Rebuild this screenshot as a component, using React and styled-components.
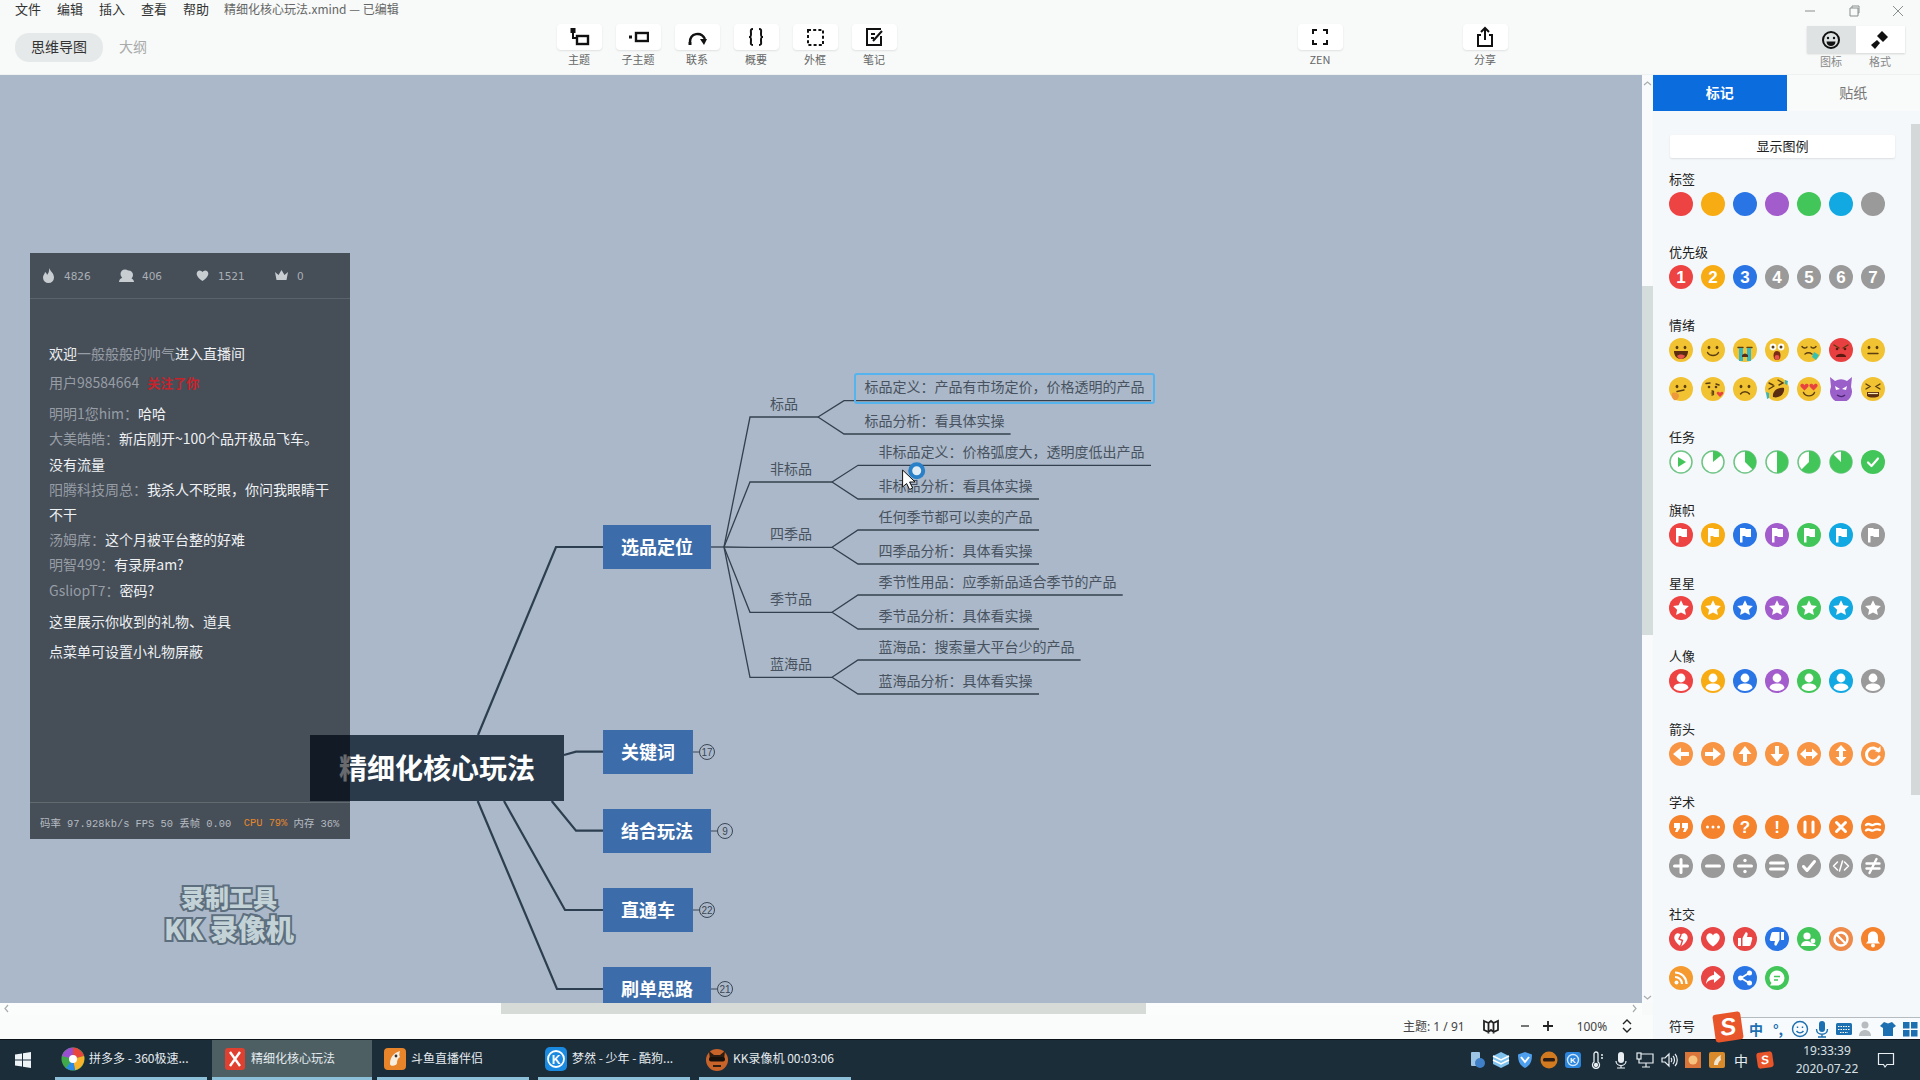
import React from 'react';
import styled, { createGlobalStyle } from 'styled-components';

const CJK = '"Noto Sans CJK SC", "Noto Sans", sans-serif';
const CANVAS_TOP = 75;

const GlobalStyle = createGlobalStyle`
  html, body { margin: 0; padding: 0; background: #f7faf9; }
  body { font-family: ${CJK}; }
  * { box-sizing: border-box; }
`;

/* ---------- data ---------- */
const MENU = ['文件', '编辑', '插入', '查看', '帮助'];

const SUBTOPICS = [
  {
    label: '标品', labelY: 404, stemY: 417, x0: 818, textX: 864.5,
    items: [
      { text: '标品定义：产品有市场定价，价格透明的产品', textY: 387, lineY: 400.7, endX: 1151 },
      { text: '标品分析：看具体实操', textY: 421, lineY: 434, endX: 1010.6 },
    ],
  },
  {
    label: '非标品', labelY: 469, stemY: 482, x0: 832, textX: 878.6,
    items: [
      { text: '非标品定义：价格弧度大，透明度低出产品', textY: 452, lineY: 465.3, endX: 1151 },
      { text: '非标品分析：看具体实操', textY: 486, lineY: 499, endX: 1039 },
    ],
  },
  {
    label: '四季品', labelY: 534, stemY: 547.3, x0: 832, textX: 878.6,
    items: [
      { text: '任何季节都可以卖的产品', textY: 517, lineY: 530, endX: 1039 },
      { text: '四季品分析：具体看实操', textY: 551, lineY: 564, endX: 1039 },
    ],
  },
  {
    label: '季节品', labelY: 599, stemY: 612.3, x0: 832, textX: 878.6,
    items: [
      { text: '季节性用品：应季新品适合季节的产品', textY: 582, lineY: 595, endX: 1122.7 },
      { text: '季节品分析：具体看实操', textY: 616, lineY: 629, endX: 1039 },
    ],
  },
  {
    label: '蓝海品', labelY: 664, stemY: 677.3, x0: 832, textX: 878.6,
    items: [
      { text: '蓝海品：搜索量大平台少的产品', textY: 647, lineY: 660, endX: 1080.6 },
      { text: '蓝海品分析：具体看实操', textY: 681, lineY: 694, endX: 1039 },
    ],
  },
];

const TOPICS = [
  { text: '选品定位', y: 525, w: 108, h: 44 },
  { text: '关键词', y: 730, w: 90, h: 44, count: 17 },
  { text: '结合玩法', y: 809, w: 108, h: 44, count: 9 },
  { text: '直通车', y: 888, w: 90, h: 44, count: 22 },
  { text: '刷单思路', y: 967, w: 108, h: 44, count: 21 },
];

const TRUNKS = [
  'M478 735L556 547L603 547',
  'M564 755L576 751.7L603 751.7',
  'M551.7 801L576 830.7L603 830.7',
  'M504 801L565 910L603 910',
  'M477.7 801L557 989L603 989',
];

const CHAT = [
  { kind: 'sys', gap: 4, pre: '欢迎', name: '一般般般的帅气', text: '进入直播间' },
  { kind: 'follow', gap: 6, name: '用户98584664', text: '关注了你' },
  { name: '明明1您him：', text: '哈哈' },
  { name: '大美皓皓：', text: '新店刚开~100个品开极品飞车。' },
  { text: '没有流量' },
  { name: '阳腾科技周总：', text: '我杀人不眨眼，你问我眼睛干' },
  { text: '不干' },
  { name: '汤姆席：', text: '这个月被平台整的好难' },
  { name: '明智499：', text: '有录屏am?' },
  { name: 'GsliopT7：', text: '密码?' },
  { kind: 'sys', top: 6, gap: 5, text: '这里展示你收到的礼物、道具' },
  { kind: 'sys', text: '点菜单可设置小礼物屏蔽' },
];

const TASKS = [
  { label: '拼多多 - 360极速...', w: 152, ml: 0, icon: 'browser' },
  { label: '精细化核心玩法', w: 160, ml: 5, pad: 11, active: true, icon: 'xmind' },
  { label: '斗鱼直播伴侣', w: 152, ml: 5, icon: 'douyu' },
  { label: '梦然 - 少年 - 酷狗...', w: 152, ml: 9, icon: 'kugou' },
  { label: 'KK录像机 00:03:06', w: 152, ml: 9, icon: 'kk' },
];

const C = { red: '#ee4343', orange: '#f8ac14', blue: '#2a75e6', purple: '#a25ccc', green: '#43c659', cyan: '#12a9e2', gray: '#9a9a9a' };
const SEVEN = [C.red, C.orange, C.blue, C.purple, C.green, C.cyan, C.gray];

/* ---------- marker icons ---------- */
const MarkSvg = styled.svg`
  width: 24px;
  height: 24px;
  display: block;
  flex: none;
`;

const NumText = styled.text`
  font-family: "Liberation Sans", sans-serif;
  font-weight: 700;
  font-size: ${(p) => p.$size || 17}px;
  fill: #fff;
  text-anchor: middle;
`;

const Disc = ({ c, children }) => (
  <MarkSvg viewBox="0 0 24 24">
    <circle cx="12" cy="12" r="12" fill={c} />
    {children}
  </MarkSvg>
);

const WS = { stroke: '#fff', strokeWidth: 3, fill: 'none', strokeLinecap: 'round', strokeLinejoin: 'round' };

const flag = <path d="M7 5h5l1 1h5v8h-5l-1-1H9.500v6.500H7z" fill="#fff" />;
const star = <path d="M12 4.200l2.400 5 5.500.7-4 3.800 1 5.400-4.900-2.700-4.900 2.700 1-5.400-4-3.800 5.500-.7z" fill="#fff" />;
const person = (
  <g fill="#fff">
    <circle cx="12" cy="9" r="4.400" />
    <path d="M4.500 19c.5-3.600 3.600-4.600 7.500-4.600s7 1 7.500 4.600c-2 2-4.600 3-7.500 3s-5.500-1-7.500-3z" />
  </g>
);

const facePath = (d) => <path d={d} fill="none" stroke="#5a3d12" strokeWidth="1.400" strokeLinecap="round" />;
const Face = ({ c = '#f1c232', children }) => <Disc c={c}>{children}</Disc>;
const eyes = (
  <g fill="#5a3d12">
    <ellipse cx="8" cy="9.500" rx="1.400" ry="1.800" />
    <ellipse cx="16" cy="9.500" rx="1.400" ry="1.800" />
  </g>
);
const heart = (x, y, s) => (
  <path transform={`translate(${x} ${y}) scale(${s})`} d="M0 3C-3-1-7 2-5 5L0 10 5 5C7 2 3-1 0 3z" fill="#e8433f" />
);

const EMOJI = [
  <Face>{eyes}<path d="M5 13h14c0 5-3 8-7 8s-7-3-7-8z" fill="#5a2c12" /><path d="M8 18c2-2 6-2 8 0-1 2-2.500 3-4 3s-3-1-4-3z" fill="#e8534a" /></Face>,
  <Face>{eyes}{facePath('M6.500 14.500c2 4 9 4 11 0')}</Face>,
  <Face>{facePath('M5 9.500h5M14 9.500h5')}<path d="M6 10h4v13H6zM14 10h4v13h-4z" fill="#35b6c0" /><path d="M9 17c2-2 4-2 6 0v2H9z" fill="#5a2c12" /></Face>,
  <Face><circle cx="8" cy="9" r="3.400" fill="#fff" /><circle cx="16" cy="9" r="3.400" fill="#fff" /><circle cx="8" cy="9" r="1.500" fill="#5a3d12" /><circle cx="16" cy="9" r="1.500" fill="#5a3d12" /><ellipse cx="12" cy="17.500" rx="3.500" ry="4.500" fill="#7a2c16" /><ellipse cx="12" cy="19.500" rx="2.400" ry="2.400" fill="#e8534a" /></Face>,
  <Face>{facePath('M5 8.500c1.500 2 3.500 2 5 .5M14 9c1.500 1.500 3.500 1.500 5-.5M8 16c2-1.500 5-1.500 7 0')}<path d="M17 14l5 3-3 5-4-3z" fill="#35c0b0" /></Face>,
  <Face c="#e84040">{facePath('M5 7l5 3M19 7l-5 3')}<g fill="#5a1a12"><circle cx="8" cy="11" r="1.300" /><circle cx="16" cy="11" r="1.300" /><path d="M7 18c2-3 8-3 10 0v1H7z" /></g></Face>,
  <Face>{eyes}{facePath('M7 15.500h10')}</Face>,
  <Face>{eyes}{facePath('M8 14.500l7-1.500')}<path d="M3 16c3-1 6 0 7 2 0 3-2 6-5 5-2-2-3-4-2-7z" fill="#ee9a3a" /></Face>,
  <Face>{facePath('M5 6.500l4-.5M15 7l3 1')}<circle cx="8" cy="10" r="1.300" fill="#5a3d12" /><circle cx="15" cy="10" r="1.300" fill="#5a3d12" />{facePath('M11 14c2 0 2 1.500.5 2 1.500.5 1.500 2-.5 2')}{heart(19, 14, 0.6)}</Face>,
  <Face>{eyes}{facePath('M7.500 17c2-3 7-3 9 0')}</Face>,
  <Face>{facePath('M4 12l5-3M4 6l4 2M13 3l5 3-4 2')}<path d="M8 20c-1-5 4-10 11-9 1 6-5 11-11 9z" fill="#5a2c12" /><path d="M1 15l3 1v5l-2 1zM20 3l3 1-1 4-2-1z" fill="#35b6c0" /></Face>,
  <Face>{heart(7.500, 6, 0.75)}{heart(16.500, 6, 0.75)}{facePath('M6.500 15.500c2 4.500 9 4.500 11 0')}</Face>,
  <MarkSvg viewBox="0 0 24 24"><path d="M1 0l5 4a12 12 0 0 1 12 0l5-4-1 10a11 11 0 1 1-20 0z" fill="#9a5fc8" /><path d="M6 9l5 3-4 1zM18 9l-5 3 4 1z" fill="#fff" /><path d="M8 18c3 2 6 2 8 0" fill="none" stroke="#4a2470" strokeWidth="1.400" /></MarkSvg>,
  <Face>{facePath('M5 7l4 2.500-4 2.500M19 7l-4 2.500 4 2.500')}<path d="M6 15h12v4c-3 2-9 2-12 0z" fill="#5a2c12" /><path d="M7 16.500h10" stroke="#f6e6b0" strokeWidth="1.200" /></Face>,
];

const pie = (frac) => {
  const a = frac * 2 * Math.PI;
  const x = 12 + 11 * Math.sin(a);
  const y = 12 - 11 * Math.cos(a);
  return `M12 12V1A11 11 0 ${frac > 0.5 ? 1 : 0} 1 ${x.toFixed(2)} ${y.toFixed(2)}z`;
};
const PieIcon = ({ frac, children }) => (
  <MarkSvg viewBox="0 0 24 24">
    <circle cx="12" cy="12" r="11" fill="#fff" stroke="#6fc586" strokeWidth="1.500" />
    {frac ? <path d={pie(frac)} fill={C.green} /> : null}
    {children}
  </MarkSvg>
);
const TASK_ICONS = [
  <PieIcon><path d="M9 7l8 5-8 5z" fill={C.green} /></PieIcon>,
  <PieIcon frac={0.14} />,
  <PieIcon frac={0.375} />,
  <PieIcon frac={0.5} />,
  <PieIcon frac={0.625} />,
  <PieIcon frac={0.875} />,
  <Disc c={C.green}><path d="M7 12.500l3.500 3.500L17 8.500" {...WS} strokeWidth="2.200" /></Disc>,
];

const ARROW_C = '#f79545';
const arrowRight = <path d="M4 10h8V5.500l8 6.500-8 6.500V14H4z" fill="#fff" />;
const rot = (deg, el) => <g transform={`rotate(${deg} 12 12)`}>{el}</g>;
const dbl = <path d="M3 12l6-5.500V10h6V6.500l6 5.500-6 5.500V14H9v3.500z" fill="#fff" />;
const ARROWS = [
  rot(180, arrowRight),
  arrowRight,
  rot(-90, arrowRight),
  rot(90, arrowRight),
  dbl,
  rot(90, dbl),
  <><path d="M17.500 9A6.500 6.500 0 1 0 18 15" {...WS} /><path d="M14 9.500h5.500V4z" fill="#fff" /></>,
];

const ACAD_C = '#f5832d';
const ACAD_TOP = [
  <path d="M5 8h6v5l-2.500 4H6l1.500-4H5zM13 8h6v5l-2.500 4H14l1.500-4H13z" fill="#fff" />,
  <g fill="#fff"><circle cx="6.500" cy="12" r="1.500" /><circle cx="12" cy="12" r="1.500" /><circle cx="17.500" cy="12" r="1.500" /></g>,
  <NumText x="12" y="18">?</NumText>,
  <NumText x="12" y="18">!</NumText>,
  <path d="M8 7v10M16 7v10" {...WS} />,
  <path d="M7.500 7.500l9 9M16.500 7.500l-9 9" {...WS} />,
  <path d="M5 10c3-3 5 1 7 0s4-2 7-.5M5 15.500c3-3 5 1 7 0s4-2 7-.5" {...WS} strokeWidth="2.400" />,
];
const ACAD_BOTTOM = [
  <path d="M12 5.500v13M5.500 12h13" {...WS} />,
  <path d="M5.500 12h13" {...WS} />,
  <><path d="M5.500 12h13" {...WS} /><circle cx="12" cy="6.500" r="1.700" fill="#fff" /><circle cx="12" cy="17.500" r="1.700" fill="#fff" /></>,
  <path d="M5.500 9h13M5.500 15h13" {...WS} />,
  <path d="M6.500 12.500l3.500 4L17.500 7.500" {...WS} />,
  <path d="M8.500 8L4.500 12l4 4M15.500 8l4 4-4 4M13.500 7l-3 10" {...WS} strokeWidth="1.500" />,
  <path d="M5.500 9.500h13M5.500 14.500h13M15.500 5l-7 14" {...WS} strokeWidth="2.400" />,
];

const heartPath = 'M12 19.500C5 14.500 4.500 10.500 6 8c1.800-2.600 4.800-2 6 .5 1.200-2.500 4.200-3.100 6-.5 1.500 2.500 1 6.500-6 11.500z';
const thumb = <path d="M5 11h3v8H5zM9.500 11l3-5.500c1.500-.5 2.500.5 2 2.500l-.5 2h4c1 0 1.500 1 1.200 2l-1.500 5.500c-.2 1-1 1.500-2 1.500H9.500z" fill="#fff" />;
const SOCIAL_TOP = [
  <Disc c="#e84545"><path d={heartPath} fill="#fff" /><path d="M12 8l-2 4 3.500 1.500-2 6" stroke="#e84545" strokeWidth="1.400" fill="none" /></Disc>,
  <Disc c="#e84545"><path d={heartPath} fill="#fff" /></Disc>,
  <Disc c="#e84545">{thumb}</Disc>,
  <Disc c={C.blue}><g transform="rotate(180 12 12)">{thumb}</g></Disc>,
  <Disc c={C.green}><circle cx="10" cy="9" r="3.600" fill="#fff" /><circle cx="16" cy="14" r="2.400" fill="#fff" /><path d="M4 19c.5-4 3-5 6-5s3.500 1 4 2l3 1c1.500.5 2 1 2 2z" fill="#fff" /></Disc>,
  <Disc c="#ee8a4a"><circle cx="12" cy="12" r="6.500" {...WS} strokeWidth="2.400" /><path d="M7.500 7.500l9 9" {...WS} strokeWidth="2.400" /></Disc>,
  <Disc c={ACAD_C}><path d="M12 4.500c-3.500 0-5 2.500-5 5.500v4l-2 2.500h14L17 14v-4c0-3-1.500-5.500-5-5.500z" fill="#fff" /><circle cx="12" cy="18.500" r="2" fill="#fff" /></Disc>,
];
const SOCIAL_BOTTOM = [
  <Disc c="#f59a2e"><circle cx="7.500" cy="16.500" r="2" fill="#fff" /><path d="M6 11c4 0 7 3 7 7M6 6.500c6.500 0 11.500 5 11.500 11.500" {...WS} strokeWidth="2.200" strokeLinecap="butt" /></Disc>,
  <Disc c="#e84545"><path d="M13 5l7 6-7 6v-3.500c-3.500 0-6 1-8 4.500 .5-5 3.500-8.500 8-9z" fill="#fff" /></Disc>,
  <Disc c={C.blue}><path d="M8 12l8-5M8 12l8 5" stroke="#fff" strokeWidth="1.800" /><circle cx="7.500" cy="12" r="2.500" fill="#fff" /><circle cx="16.500" cy="7" r="2.500" fill="#fff" /><circle cx="16.500" cy="17" r="2.500" fill="#fff" /></Disc>,
  <Disc c={C.green}><path d="M12 4.500a7.500 7.500 0 0 1 0 15h-7l1.500-2.500A7.500 7.500 0 0 1 12 4.500z" fill="#fff" /><path d="M9 10.500h6M9 14h4" stroke={C.green} strokeWidth="1.600" /></Disc>,
];

const SECTIONS = [
  { title: '标签', rows: [SEVEN.map((c) => <Disc c={c} />)] },
  {
    title: '优先级',
    rows: [[C.red, C.orange, C.blue, C.gray, C.gray, C.gray, C.gray].map((c, i) => (
      <Disc c={c}><NumText x="12" y="18">{i + 1}</NumText></Disc>
    ))],
  },
  { title: '情绪', rows: [EMOJI.slice(0, 7), EMOJI.slice(7)] },
  { title: '任务', rows: [TASK_ICONS] },
  { title: '旗帜', rows: [SEVEN.map((c) => <Disc c={c}>{flag}</Disc>)] },
  { title: '星星', rows: [SEVEN.map((c) => <Disc c={c}>{star}</Disc>)] },
  { title: '人像', rows: [SEVEN.map((c) => <Disc c={c}>{person}</Disc>)] },
  { title: '箭头', rows: [ARROWS.map((a) => <Disc c={ARROW_C}>{a}</Disc>)] },
  {
    title: '学术',
    rows: [ACAD_TOP.map((a) => <Disc c={ACAD_C}>{a}</Disc>), ACAD_BOTTOM.map((a) => <Disc c={C.gray}>{a}</Disc>)],
  },
  { title: '社交', rows: [SOCIAL_TOP, SOCIAL_BOTTOM] },
  { title: '符号', rows: [] },
];

/* ---------- toolbar icons ---------- */
const ToolSvg = styled.svg`
  width: 22px;
  height: 22px;
  display: block;
  fill: none;
  stroke: #111;
  stroke-width: 2;
`;

const TOOLS = [
  { label: '主题', icon: <><path d="M5 3v9h4" /><rect x="9" y="10" width="11" height="8" strokeWidth="2.400" /><rect x="3.500" y="3" width="3" height="3" fill="#111" /></> },
  { label: '子主题', icon: <><rect x="9" y="7" width="12" height="8" strokeWidth="2.400" /><rect x="2" y="9.500" width="3" height="3" fill="#111" stroke="none" /></> },
  { label: '联系', icon: <><path d="M4 16c0-9 11-11 15-3" strokeWidth="2.400" /><path d="M14 13h7l-3 6z" fill="#111" stroke="none" /><rect x="2.500" y="16" width="3" height="3" fill="#111" stroke="none" /></> },
  { label: '概要', icon: <path d="M8 3c-3 0-2 2-2 5s-.5 3-2 3c1.500 0 2 0 2 3s-1 5 2 5M14 3c3 0 2 2 2 5s.5 3 2 3c-1.500 0-2 0-2 3s1 5-2 5" /> },
  { label: '外框', icon: <rect x="4" y="4" width="15" height="15" strokeDasharray="3 2.200" /> },
  { label: '笔记', icon: <><path d="M18 10v9H4V3h14" /><path d="M8 8h4M8 12h3M10 15l9-10" /></> },
];

/* ---------- styled parts ---------- */
const Page = styled.div`
  position: relative;
  width: 1920px;
  height: 1080px;
  overflow: hidden;
  display: flex;
  flex-direction: column;
  background: #f7faf9;
  color: #333;
`;

const TopBar = styled.header`
  height: 75px;
  flex: none;
  display: flex;
  flex-direction: column;
  border-bottom: 1px solid #eef2f0;
`;

const MenuRow = styled.div`
  height: 20px;
  padding: 0 0 4px 15px;
  display: flex;
  align-items: center;
  gap: 16px;
  font-size: 13px;
  color: #333;
`;

const DocTitle = styled.span`
  font-size: 12px;
  color: #666;
  margin-left: -1px;
`;

const WindowBtns = styled.div`
  margin: 6px 0 0 auto;
  display: flex;
  align-items: center;
  gap: 30px;
  padding-right: 15px;
`;

const WinSvg = styled.svg`
  width: 14px;
  height: 14px;
  fill: none;
  stroke: #8a8f8f;
  stroke-width: 1;
  display: block;
`;

const ToolRow = styled.div`
  flex: 1;
  display: flex;
  align-items: flex-start;
`;

const ViewTabs = styled.div`
  width: 549.5px;
  padding: 13px 0 0 15px;
  display: flex;
  align-items: center;
`;

const ViewTab = styled.div`
  width: ${(p) => (p.$active ? '88px' : 'auto')};
  height: 29px;
  margin-right: 16px;
  padding-bottom: 3px;
  border-radius: 14px;
  display: flex;
  align-items: center;
  justify-content: center;
  font-size: 14px;
  color: ${(p) => (p.$active ? '#333' : '#aaa')};
  background: ${(p) => (p.$active ? '#e6e9e9' : 'transparent')};
`;

const ToolCell = styled.div`
  width: 59px;
  margin-left: ${(p) => p.$ml || 0}px;
  padding-top: 4px;
  display: flex;
  flex-direction: column;
  align-items: center;
`;

const ToolBtn = styled.div`
  width: 45px;
  height: 26px;
  background: #fff;
  border-radius: 4px;
  box-shadow: 0 1px 2px rgba(0, 0, 0, 0.1);
  display: flex;
  align-items: center;
  justify-content: center;
`;

const ToolLabel = styled.div`
  margin-top: 2px;
  height: 14px;
  line-height: 14px;
  font-size: 11px;
  color: #666;
`;

const ToggleWrap = styled.div`
  margin-left: ${(p) => p.$ml}px;
  padding-top: 6px;
  width: 98px;
`;

const ToggleRow = styled.div`
  height: 27px;
  display: flex;
  box-shadow: 0 1px 2px rgba(0, 0, 0, 0.15);
  background: #fff;
`;

const ToggleBtn = styled.div`
  flex: 1;
  display: flex;
  align-items: center;
  justify-content: center;
  background: ${(p) => (p.$active ? '#dfe2e2' : '#fff')};
`;

const ToggleLabels = styled.div`
  display: flex;
  margin-top: 1px;
  font-size: 11px;
  line-height: 14px;
  color: #888;
  & > span { flex: 1; text-align: center; }
`;

const Body = styled.div`
  flex: 1;
  min-height: 0;
  display: flex;
`;

const LeftCol = styled.div`
  width: 1653px;
  flex: none;
  display: flex;
  flex-direction: column;
`;

const CanvasRow = styled.div`
  height: 928px;
  display: flex;
`;

const Canvas = styled.main`
  position: relative;
  width: 1642px;
  height: 928px;
  overflow: hidden;
  background: #abb8c9;
`;

const MapSvg = styled.svg`
  position: absolute;
  inset: 0;
  width: 1642px;
  height: 928px;
`;

const CountText = styled.text`
  font-family: "Liberation Sans", sans-serif;
  font-size: 10px;
  fill: #3b4654;
  text-anchor: middle;
`;

const RootNode = styled.div`
  position: absolute;
  left: 310px;
  top: ${735 - CANVAS_TOP}px;
  width: 254px;
  height: 66px;
  background: #2a3a4a;
  color: #fff;
  font-size: 28px;
  font-weight: 700;
  line-height: 64px;
  padding-left: 29px;
  white-space: nowrap;
`;

const TopicNode = styled.div`
  position: absolute;
  left: 603px;
  top: ${(p) => p.$y - CANVAS_TOP}px;
  width: ${(p) => p.$w}px;
  height: ${(p) => p.$h}px;
  padding-bottom: 2px;
  background: #3c6ca9;
  color: #fff;
  font-size: 18px;
  font-weight: 700;
  display: flex;
  align-items: center;
  justify-content: center;
`;

const MapLabel = styled.div`
  position: absolute;
  left: ${(p) => p.$x}px;
  top: ${(p) => p.$y - CANVAS_TOP - 11}px;
  height: 20px;
  line-height: 20px;
  font-size: 14px;
  color: #47525e;
  white-space: nowrap;
`;

const SelectBox = styled.div`
  position: absolute;
  left: 854px;
  top: ${373 - CANVAS_TOP}px;
  width: 301px;
  height: 31px;
  border: 2px solid #55b4ee;
  border-radius: 3px;
`;

const ChatWindow = styled.section`
  position: absolute;
  left: 30px;
  top: ${253 - CANVAS_TOP}px;
  width: 320px;
  height: 586px;
  background: rgba(3, 7, 13, 0.6);
  display: flex;
  flex-direction: column;
`;

const ChatHeader = styled.div`
  height: 46px;
  flex: none;
  border-bottom: 1px solid #5a626b;
`;

const StatGroup = styled.div`
  height: 45px;
  display: grid;
  grid-template-columns: 78px 76px 79px 1fr;
  align-items: center;
  padding-left: 11px;
`;

const Stat = styled.div`
  display: flex;
  align-items: center;
  gap: 8px;
  font-family: "DejaVu Sans", sans-serif;
  font-size: 10.500px;
  color: #a9afb5;
`;

const StatSvg = styled.svg`
  width: 15px;
  height: 15px;
  fill: #c8cdd2;
  display: block;
`;

const ChatBody = styled.div`
  flex: 1;
  padding: 42px 19px 0;
`;

const ChatLine = styled.div`
  font-size: 14px;
  line-height: ${(p) => (p.$sys ? '25px' : '25.200px')};
  color: #eef1f3;
  white-space: nowrap;
  margin-top: ${(p) => p.$top || 0}px;
  margin-bottom: ${(p) => p.$gap || 0}px;
`;

const ChatName = styled.span`
  color: #969da5;
`;

const FollowText = styled.span`
  color: #c8232b;
  font-size: 13px;
  font-weight: 700;
  margin-left: 8px;
`;

const ChatFooter = styled.div`
  height: 37px;
  flex: none;
  border-top: 1px solid #62696f;
  padding: 3px 0 0 10px;
  display: flex;
  align-items: center;
  white-space: pre;
  font-family: "Liberation Mono", "Noto Sans CJK SC", monospace;
  font-size: 10.400px;
  color: #b5bbc0;
`;

const HotText = styled.span`
  color: #e6882a;
`;

const Watermark = styled.div`
  position: absolute;
  left: 150px;
  top: ${882 - CANVAS_TOP}px;
  width: 158px;
  text-align: center;
  font-family: ${CJK};
  font-weight: 900;
  color: #c3d2d6;
  -webkit-text-stroke: 4px #5d6f7e;
  paint-order: stroke fill;
  white-space: nowrap;
`;

const WaterLine = styled.div`
  font-size: ${(p) => p.$size}px;
  line-height: ${(p) => p.$lh}px;
`;

const VScroll = styled.div`
  width: 11px;
  height: 928px;
  position: relative;
  background: #f8fafb;
`;

const ScrollThumbV = styled.div`
  margin-top: ${286 - CANVAS_TOP}px;
  height: 349px;
  background: #d5dcdc;
`;

const Chevron = styled.svg`
  position: absolute;
  width: 9px;
  height: 9px;
  fill: none;
  stroke: #a8aeb0;
  stroke-width: 1.200;
  left: ${(p) => p.$x}px;
  top: ${(p) => p.$y}px;
`;

const HScroll = styled.div`
  position: relative;
  height: 12px;
  width: 1642px;
  background: #fbfdfc;
`;

const ScrollThumbH = styled.div`
  margin-left: 501px;
  width: 645px;
  height: 11px;
  background: #d6dbd8;
`;

const StatusBar = styled.footer`
  flex: 1;
  display: flex;
  align-items: center;
  padding: 0 0 2px 1403px;
  font-size: 12px;
  color: #444;
  white-space: nowrap;
  background: #fafcfb;
`;

const StatusText = styled.span`
  font-family: "Noto Sans", ${CJK};
  font-size: 12px;
  margin-left: ${(p) => p.$ml || 0}px;
`;

const StatusSvg = styled.svg`
  width: 16px;
  height: 16px;
  fill: none;
  stroke: #222;
  stroke-width: ${(p) => p.$sw || 1.600};
  display: block;
  margin-left: ${(p) => p.$ml || 0}px;
`;

const Panel = styled.aside`
  flex: 1;
  position: relative;
  display: flex;
  flex-direction: column;
  background: #f5f8fa;
  overflow: hidden;
`;

const PanelTabs = styled.div`
  height: 36px;
  flex: none;
  display: flex;
  background: #f9fbfa;
`;

const PanelTab = styled.div`
  flex: 1;
  padding-bottom: 2px;
  display: flex;
  align-items: center;
  justify-content: center;
  font-size: 14px;
  font-weight: ${(p) => (p.$active ? 700 : 400)};
  color: ${(p) => (p.$active ? '#fff' : '#777')};
  background: ${(p) => (p.$active ? '#0b6cde' : 'transparent')};
`;

const PanelScroll = styled.div`
  flex: 1;
  min-height: 0;
  position: relative;
  padding: 24px 0 0 16px;
`;

const PanelThumb = styled.div`
  position: absolute;
  right: 0;
  top: 13px;
  width: 9px;
  height: 671px;
  background: #d4d8d9;
`;

const LegendBtn = styled.div`
  width: 225px;
  height: 23px;
  margin: 0 0 12px 1px;
  padding-bottom: 3px;
  background: #fff;
  box-shadow: 0 1px 2px rgba(0, 0, 0, 0.1);
  border-radius: 2px;
  display: flex;
  align-items: center;
  justify-content: center;
  font-size: 13px;
  color: #222;
`;

const Section = styled.section`
  margin-bottom: 27px;
`;

const SectionTitle = styled.div`
  height: 20px;
  line-height: 18px;
  margin-bottom: 2px;
  font-size: 13px;
  color: #222;
`;

const IconRow = styled.div`
  display: flex;
  gap: 8px;
  & + & { margin-top: 15px; }
`;

const Taskbar = styled.div`
  height: 41px;
  flex: none;
  display: flex;
  align-items: stretch;
  background: #1c2d3a;
  border-top: 1px solid #0b1218;
  padding-right: 25px;
  color: #e4ebef;
`;

const StartBtn = styled.div`
  width: 55px;
  flex: none;
  display: flex;
  align-items: center;
  padding-left: 14px;
`;

const TaskItem = styled.div`
  width: ${(p) => p.$w}px;
  margin-left: ${(p) => p.$ml}px;
  padding-left: ${(p) => p.$pad || 6}px;
  flex: none;
  display: flex;
  align-items: center;
  gap: 4px;
  font-size: 12px;
  white-space: nowrap;
  border-bottom: 3px solid #8cc0d8;
  background: ${(p) => (p.$active ? '#4d5f63' : 'transparent')};
  & > span { margin-bottom: 2px; }
`;

const TaskSvg = styled.svg`
  width: 24px;
  height: 24px;
  flex: none;
  display: block;
`;

const IconLetter = styled.text`
  font-family: "Liberation Sans", sans-serif;
  font-weight: 700;
  font-size: ${(p) => p.$size}px;
  fill: #fff;
  text-anchor: middle;
`;

const Tray = styled.div`
  margin-left: auto;
  display: flex;
  align-items: center;
`;

const TrayCell = styled.div`
  width: 24px;
  display: flex;
  align-items: center;
  justify-content: center;
  font-size: 14px;
  color: #e8eef1;
`;

const TraySvg = styled.svg`
  width: 18px;
  height: 18px;
  display: block;
`;

const Clock = styled.div`
  width: 100px;
  display: flex;
  flex-direction: column;
  align-items: center;
  justify-content: center;
  font-family: "Noto Sans", sans-serif;
  font-size: 12px;
  line-height: 18px;
  color: #d8e0e4;
`;

const NotifyCell = styled.div`
  width: 18px;
  display: flex;
  align-items: center;
  justify-content: center;
`;

const ImeBar = styled.div`
  position: absolute;
  left: 1726px;
  top: 1017px;
  width: 194px;
  height: 22px;
  padding-left: 19px;
  background: #f8fbfd;
  border-top: 1px solid #b5bcc0;
  display: flex;
  align-items: center;
  color: #1c6fb0;
  font-size: 14px;
  font-weight: 700;
`;

const ImeCell = styled.div`
  width: 22px;
  flex: none;
  display: flex;
  justify-content: center;
  align-items: center;
`;

const SogouBadge = styled.div`
  position: absolute;
  left: ${(p) => p.$x}px;
  top: ${(p) => p.$y}px;
  width: ${(p) => p.$s}px;
  height: ${(p) => p.$s}px;
  background: #e8552a;
  border-radius: 3px;
  transform: rotate(-8deg);
  display: flex;
  align-items: center;
  justify-content: center;
  color: #fff;
  font-family: "Liberation Sans", sans-serif;
  font-style: italic;
  font-weight: 700;
  font-size: ${(p) => p.$s - 4}px;
  line-height: 1;
`;

const TrayBadge = styled(SogouBadge)`
  position: static;
`;

/* ---------- small pieces ---------- */
const TaskIcon = ({ kind }) => {
  if (kind === 'browser') {
    return (
      <TaskSvg viewBox="0 0 24 24">
        <circle cx="12" cy="12" r="11.500" fill="#3ea84a" />
        <path d="M12 .5A11.500 11.500 0 0 1 23 9L12 12z" fill="#e8453c" />
        <path d="M23 9A11.500 11.500 0 0 1 14 23L12 12z" fill="#f7b32b" />
        <path d="M12 .5A11.500 11.500 0 0 0 1 9L12 12z" fill="#9a4fd0" />
        <path d="M14 23A11.500 11.500 0 0 1 5 21L12 12z" fill="#2a8ae6" />
        <circle cx="12" cy="12" r="4" fill="#fff" />
      </TaskSvg>
    );
  }
  if (kind === 'xmind') {
    return (
      <TaskSvg viewBox="0 0 24 24">
        <rect x="2" y="1" width="20" height="22" rx="3" fill="#e0402f" />
        <path d="M7 5l10 14M17 5L7 19" stroke="#fff" strokeWidth="2.400" fill="none" />
      </TaskSvg>
    );
  }
  if (kind === 'douyu') {
    return (
      <TaskSvg viewBox="0 0 24 24">
        <rect x="1" y="1" width="22" height="22" rx="4" fill="#e8842a" />
        <path d="M7 17c0-6 3-11 10-13-1 3-1 4 0 6-2 1-3 3-3 6 0 3-7 4-7 1z" fill="#f6efe0" />
        <circle cx="13" cy="9" r="1.400" fill="#333" />
      </TaskSvg>
    );
  }
  if (kind === 'kugou') {
    return (
      <TaskSvg viewBox="0 0 24 24">
        <rect x="1" y="0" width="22" height="24" rx="5" fill="#1a8ae0" />
        <circle cx="12" cy="12" r="8" fill="none" stroke="#fff" strokeWidth="1.800" />
        <IconLetter x="12" y="16.500" $size={12}>K</IconLetter>
      </TaskSvg>
    );
  }
  return (
    <TaskSvg viewBox="0 0 24 24">
      <circle cx="12" cy="13" r="11" fill="#c8632a" />
      <path d="M4 4l5 4h6l5-4-1 8H5z" fill="#2b1c14" />
      <rect x="4" y="10" width="16" height="4.500" rx="2" fill="#15100c" />
      <path d="M8 19h8" stroke="#2b1c14" strokeWidth="2" />
    </TaskSvg>
  );
};

const TRAY = [
  <TraySvg viewBox="0 0 18 18"><rect x="3" y="1" width="9" height="14" rx="1" fill="#9cc4e4" /><circle cx="12" cy="12" r="5" fill="#3f80c8" /></TraySvg>,
  <TraySvg viewBox="0 0 18 18"><path d="M9 1l8 4v8l-8 4-8-4V5z" fill="#7fc2ee" /><path d="M1 5l8 4 8-4M1 9l8 4 8-4" stroke="#fff" strokeWidth="1.400" fill="none" /></TraySvg>,
  <TraySvg viewBox="0 0 18 18"><path d="M9 1l7 2.500c0 7-2 11-7 13.500C4 14.500 2 10.500 2 3.500z" fill="#4ea0ee" /><path d="M5 6l4 5 4-5" stroke="#fff" strokeWidth="2" fill="none" /></TraySvg>,
  <TraySvg viewBox="0 0 18 18"><circle cx="9" cy="9" r="8.500" fill="#d27a1f" /><rect x="3" y="7" width="12" height="3.500" rx="1.500" fill="#2b1c14" /></TraySvg>,
  <TraySvg viewBox="0 0 18 18"><rect x="1" y="1" width="16" height="16" rx="3" fill="#2b85dc" /><circle cx="9" cy="9" r="5.500" fill="none" stroke="#cfe6fa" strokeWidth="1.400" /><IconLetter x="9" y="12" $size={8}>K</IconLetter></TraySvg>,
  <TraySvg viewBox="0 0 18 18" fill="none" stroke="#e8eef1" strokeWidth="1.300"><path d="M6 11V3a2 2 0 0 1 4 0v8a3.500 3.500 0 1 1-4 0z" /><circle cx="8" cy="14" r="1.500" fill="#e8eef1" /><path d="M13 4h2M13 7h2" /></TraySvg>,
  <TraySvg viewBox="0 0 18 18" fill="#e8eef1"><rect x="6" y="1" width="6" height="11" rx="3" /><path d="M4 10c0 6 10 6 10 0M9 14v3M5 17h8" fill="none" stroke="#e8eef1" strokeWidth="1.200" /></TraySvg>,
  <TraySvg viewBox="0 0 18 18" fill="none" stroke="#e8eef1" strokeWidth="1.200"><path d="M3 3h14v9H3zM10 12v4M6 16h8" /><rect x="1" y="2" width="4" height="6" fill="#1c2d3a" /></TraySvg>,
  <TraySvg viewBox="0 0 18 18" fill="none" stroke="#e8eef1" strokeWidth="1.200"><path d="M2 7v4h3l4 4V3L5 7zM11 7c1 1 1 3 0 4M13 5c2 2 2 6 0 8M15 3c3 3 3 9 0 12" /></TraySvg>,
  <TraySvg viewBox="0 0 18 18"><rect x="1" y="1" width="16" height="16" fill="#d9743a" /><circle cx="9" cy="9" r="4.500" fill="#f6c27e" /></TraySvg>,
  <TraySvg viewBox="0 0 18 18"><rect x="1" y="1" width="16" height="16" rx="2" fill="#d98a2a" /><path d="M6 14c0-5 3-8 7-10-1 3 0 4 0 5-2 1-3 3-3 5z" fill="#f1e6d0" /></TraySvg>,
];

const App = () => (
  <Page>
    <GlobalStyle />
    <TopBar>
      <MenuRow>
        {MENU.map((m) => <span key={m}>{m}</span>)}
        <DocTitle>精细化核心玩法.xmind — 已编辑</DocTitle>
        <WindowBtns>
          <WinSvg viewBox="0 0 14 14"><path d="M2 7h10" /></WinSvg>
          <WinSvg viewBox="0 0 14 14"><path d="M3 4h8v8H3zM5 4V2h7v7h-1" /></WinSvg>
          <WinSvg viewBox="0 0 14 14"><path d="M2 2l10 10M12 2L2 12" /></WinSvg>
        </WindowBtns>
      </MenuRow>
      <ToolRow>
        <ViewTabs>
          <ViewTab $active>思维导图</ViewTab>
          <ViewTab>大纲</ViewTab>
        </ViewTabs>
        {TOOLS.map((t) => (
          <ToolCell key={t.label}>
            <ToolBtn><ToolSvg viewBox="0 0 22 22">{t.icon}</ToolSvg></ToolBtn>
            <ToolLabel>{t.label}</ToolLabel>
          </ToolCell>
        ))}
        <ToolCell $ml={387}>
          <ToolBtn>
            <ToolSvg viewBox="0 0 22 22" strokeWidth="2.400"><path d="M4 8V4h4M14 4h4v4M18 14v4h-4M8 18H4v-4" /></ToolSvg>
          </ToolBtn>
          <ToolLabel>ZEN</ToolLabel>
        </ToolCell>
        <ToolCell $ml={106}>
          <ToolBtn>
            <ToolSvg viewBox="0 0 22 22"><path d="M7 9H4v11h14V9h-3M11 14V2M7 6l4-4 4 4" /></ToolSvg>
          </ToolBtn>
          <ToolLabel>分享</ToolLabel>
        </ToolCell>
        <ToggleWrap $ml={292}>
          <ToggleRow>
            <ToggleBtn $active>
              <ToolSvg viewBox="0 0 22 22">
                <circle cx="11" cy="11" r="8" />
                <circle cx="8" cy="9" r="1.200" fill="#111" stroke="none" />
                <circle cx="14" cy="9" r="1.200" fill="#111" stroke="none" />
                <path d="M6.500 12.500h9c0 6-9 6-9 0z" fill="#111" stroke="none" />
              </ToolSvg>
            </ToggleBtn>
            <ToggleBtn>
              <ToolSvg viewBox="0 0 22 22" stroke="none">
                <path d="M13 2l6 6-5 5-6-6z" fill="#111" stroke="none" />
                <path d="M8 11l3 3-5 6-4-4z" fill="#111" stroke="none" />
              </ToolSvg>
            </ToggleBtn>
          </ToggleRow>
          <ToggleLabels><span>图标</span><span>格式</span></ToggleLabels>
        </ToggleWrap>
      </ToolRow>
    </TopBar>

    <Body>
      <LeftCol>
        <CanvasRow>
          <Canvas>
            <MapSvg viewBox={`0 ${CANVAS_TOP} 1642 928`} fill="none">
              {TRUNKS.map((d) => <path key={d} d={d} stroke="#2c3e50" strokeWidth="2.200" />)}
              <path d="M711 547H724" stroke="#34404e" strokeWidth="1.300" />
              {SUBTOPICS.map((s) => (
                <g key={s.label} stroke="#34404e" strokeWidth="1.300">
                  <path d={`M724 547L750 ${s.stemY}H${s.x0}`} />
                  {s.items.map((it) => (
                    <path key={it.text} d={`M${s.x0} ${s.stemY}L${s.x0 + 26} ${it.lineY}H${it.endX}`} />
                  ))}
                </g>
              ))}
              {TOPICS.filter((t) => t.count).map((t) => {
                const cx = 603 + t.w + 14;
                const cy = t.y + 22;
                return (
                  <g key={t.text}>
                    <path d={`M${603 + t.w} ${cy}H${cx - 8}`} stroke="#3b4654" />
                    <circle cx={cx} cy={cy} r="7.500" stroke="#3b4654" />
                    <CountText x={cx} y={cy + 3.500}>{t.count}</CountText>
                  </g>
                );
              })}
            </MapSvg>

            <RootNode>精细化核心玩法</RootNode>
            {TOPICS.map((t) => (
              <TopicNode key={t.text} $y={t.y} $w={t.w} $h={t.h}>{t.text}</TopicNode>
            ))}
            {SUBTOPICS.map((s) => (
              <React.Fragment key={s.label}>
                <MapLabel $x={770} $y={s.labelY}>{s.label}</MapLabel>
                {s.items.map((it) => (
                  <MapLabel key={it.text} $x={s.textX} $y={it.textY}>{it.text}</MapLabel>
                ))}
              </React.Fragment>
            ))}
            <SelectBox />

            <ChatWindow>
              <ChatHeader>
                <StatGroup>
                  <Stat>
                    <StatSvg viewBox="0 0 15 15"><path d="M8 0c1 3 5 5 5 9.500A5.500 5.500 0 0 1 2 9.500C2 7 4 6 4 4c1.500 1 2 2 2 3 1.500-2 2.500-4 2-7z" /></StatSvg>
                    4826
                  </Stat>
                  <Stat>
                    <StatSvg viewBox="0 0 15 15"><circle cx="6" cy="6" r="4.500" /><circle cx="9.500" cy="7" r="4.500" /><path d="M0 14c0-3 3-5 7-5s8 2 8 5z" /></StatSvg>
                    406
                  </Stat>
                  <Stat>
                    <StatSvg viewBox="0 0 15 15"><path d="M7.500 13C1 8.500 1 5.500 2.500 3.500c1.800-2 4-1 5 .5 1-1.500 3.200-2.500 5-.5C14 5.500 14 8.500 7.500 13z" /></StatSvg>
                    1521
                  </Stat>
                  <Stat>
                    <StatSvg viewBox="0 0 15 15"><path d="M1 4l3.500 3L7.500 2l3 5L14 4l-1.500 8h-10z" /></StatSvg>
                    0
                  </Stat>
                </StatGroup>
              </ChatHeader>
              <ChatBody>
                {CHAT.map((c) => (
                  <ChatLine key={c.text} $sys={c.kind === 'sys'} $gap={c.gap} $top={c.top}>
                    {c.kind === 'follow' ? (
                      <><ChatName>{c.name}</ChatName><FollowText>{c.text}</FollowText></>
                    ) : (
                      <>{c.pre}{c.name ? <ChatName>{c.name}</ChatName> : null}{c.text}</>
                    )}
                  </ChatLine>
                ))}
              </ChatBody>
              <ChatFooter>
                码率 97.928kb/s FPS 50 丢帧 0.00  <HotText>CPU 79%</HotText> 内存 36%
              </ChatFooter>
            </ChatWindow>

            <Watermark>
              <WaterLine $size={24} $lh={30}>录制工具</WaterLine>
              <WaterLine $size={28} $lh={32}>KK 录像机</WaterLine>
            </Watermark>

            <MapSvg viewBox={`0 ${CANVAS_TOP} 1642 928`} fill="none">
              <circle cx="916.700" cy="470.700" r="6.500" stroke="#2a80c8" strokeWidth="4" fill="#dfeaf2" />
              <path d="M902.600 470v17l4-3.500 3 6 3-1.500-3-6h5.500z" fill="#fff" stroke="#111" strokeWidth="1" />
            </MapSvg>
          </Canvas>
          <VScroll>
            <Chevron $x={1} $y={4} viewBox="0 0 9 9"><path d="M1 6l3.500-3L8 6" /></Chevron>
            <ScrollThumbV />
            <Chevron $x={1} $y={918} viewBox="0 0 9 9"><path d="M1 3l3.500 3L8 3" /></Chevron>
          </VScroll>
        </CanvasRow>
        <HScroll>
          <Chevron $x={2} $y={1} viewBox="0 0 9 9"><path d="M6 1L3 4.500 6 8" /></Chevron>
          <ScrollThumbH />
          <Chevron $x={1630} $y={1} viewBox="0 0 9 9"><path d="M3 1l3 3.500L3 8" /></Chevron>
        </HScroll>
        <StatusBar>
          <StatusText>主题: 1 / 91</StatusText>
          <StatusSvg $ml={18} viewBox="0 0 16 16" $sw={1.800}><path d="M1 3l4.500 2v9L1 12zM5.500 5L8 3l2.500 2v9L8 12l-2.500 2zM10.500 5L15 3v9l-4.500 2z" /></StatusSvg>
          <StatusSvg $ml={18} viewBox="0 0 16 16" $sw={1.800}><path d="M4 8h8" stroke="#666" /></StatusSvg>
          <StatusSvg $ml={7} viewBox="0 0 16 16" $sw={1.800}><path d="M3 8h10M8 3v10" /></StatusSvg>
          <StatusText $ml={21}>100%</StatusText>
          <StatusSvg $ml={12} viewBox="0 0 16 16" $sw={1.400}><path d="M4 6l4-4 4 4M4 10l4 4 4-4" /></StatusSvg>
        </StatusBar>
      </LeftCol>

      <Panel>
        <PanelTabs>
          <PanelTab $active>标记</PanelTab>
          <PanelTab>贴纸</PanelTab>
        </PanelTabs>
        <PanelScroll>
          <PanelThumb />
          <LegendBtn>显示图例</LegendBtn>
          {SECTIONS.map((s) => (
            <Section key={s.title}>
              <SectionTitle>{s.title}</SectionTitle>
              {s.rows.map((row, i) => (
                <IconRow key={i}>
                  {row.map((icon, j) => <React.Fragment key={j}>{icon}</React.Fragment>)}
                </IconRow>
              ))}
            </Section>
          ))}
        </PanelScroll>
      </Panel>
    </Body>

    <Taskbar>
      <StartBtn>
        <TraySvg viewBox="0 0 18 18" fill="#eef3f6"><path d="M1 3.500l7-1v6H1zM9 2.300l8-1.300v7.500H9zM1 9.500h7v6l-7-1zM9 9.500h8V17l-8-1.300z" /></TraySvg>
      </StartBtn>
      {TASKS.map((t) => (
        <TaskItem key={t.label} $w={t.w} $ml={t.ml} $pad={t.pad} $active={t.active}>
          <TaskIcon kind={t.icon} />
          <span>{t.label}</span>
        </TaskItem>
      ))}
      <Tray>
        {TRAY.map((icon, i) => <TrayCell key={i}>{icon}</TrayCell>)}
        <TrayCell>中</TrayCell>
        <TrayCell><TrayBadge $s={16}>S</TrayBadge></TrayCell>
      </Tray>
      <Clock><span>19:33:39</span><span>2020-07-22</span></Clock>
      <NotifyCell>
        <TraySvg viewBox="0 0 18 18" fill="none" stroke="#e8eef1" strokeWidth="1.200"><path d="M1.500 2.500h15v11H10L8 16l-1.500-2.500h-5z" /></TraySvg>
      </NotifyCell>
    </Taskbar>

    <ImeBar>
      <ImeCell>中</ImeCell>
      <ImeCell>°,</ImeCell>
      <ImeCell>
        <TraySvg viewBox="0 0 18 18" fill="none" stroke="#1c6fb0" strokeWidth="1.400"><circle cx="9" cy="9" r="7.500" /><path d="M5.500 11c2 2.500 5 2.500 7 0M6.500 6.500v1.500M11.500 6.500v1.500" /></TraySvg>
      </ImeCell>
      <ImeCell>
        <TraySvg viewBox="0 0 18 18" fill="#1c6fb0"><rect x="6" y="1" width="6" height="11" rx="3" /><path d="M3.500 9c0 7 11 7 11 0M9 14v3M5 17h8" fill="none" stroke="#1c6fb0" strokeWidth="1.400" /></TraySvg>
      </ImeCell>
      <ImeCell>
        <TraySvg viewBox="0 0 18 18"><rect x="1" y="3" width="16" height="12" rx="1.500" fill="#1c6fb0" /><path d="M3 6.500h12M3 9.500h12M5 12.500h8" stroke="#fff" strokeWidth="1.200" strokeDasharray="1.500 1" /></TraySvg>
      </ImeCell>
      <ImeCell>
        <TraySvg viewBox="0 0 18 18" fill="#b7bcc0"><circle cx="8" cy="5" r="3.500" /><path d="M2 16c0-4 3-6 6-6s6 2 6 6z" /></TraySvg>
      </ImeCell>
      <ImeCell>
        <TraySvg viewBox="0 0 18 18" fill="#1c6fb0"><path d="M5 2l4 1.500L13 2l4 4-3 2v8H4V8L1 6z" /></TraySvg>
      </ImeCell>
      <ImeCell>
        <TraySvg viewBox="0 0 18 18" fill="#1c6fb0"><rect x="2" y="2" width="6.500" height="6.500" /><rect x="10" y="2" width="6.500" height="6.500" /><rect x="2" y="10" width="6.500" height="6.500" /><rect x="10" y="10" width="6.500" height="6.500" /></TraySvg>
      </ImeCell>
    </ImeBar>
    <SogouBadge $x={1714} $y={1013} $s={28}>S</SogouBadge>
  </Page>
);

export default App;
